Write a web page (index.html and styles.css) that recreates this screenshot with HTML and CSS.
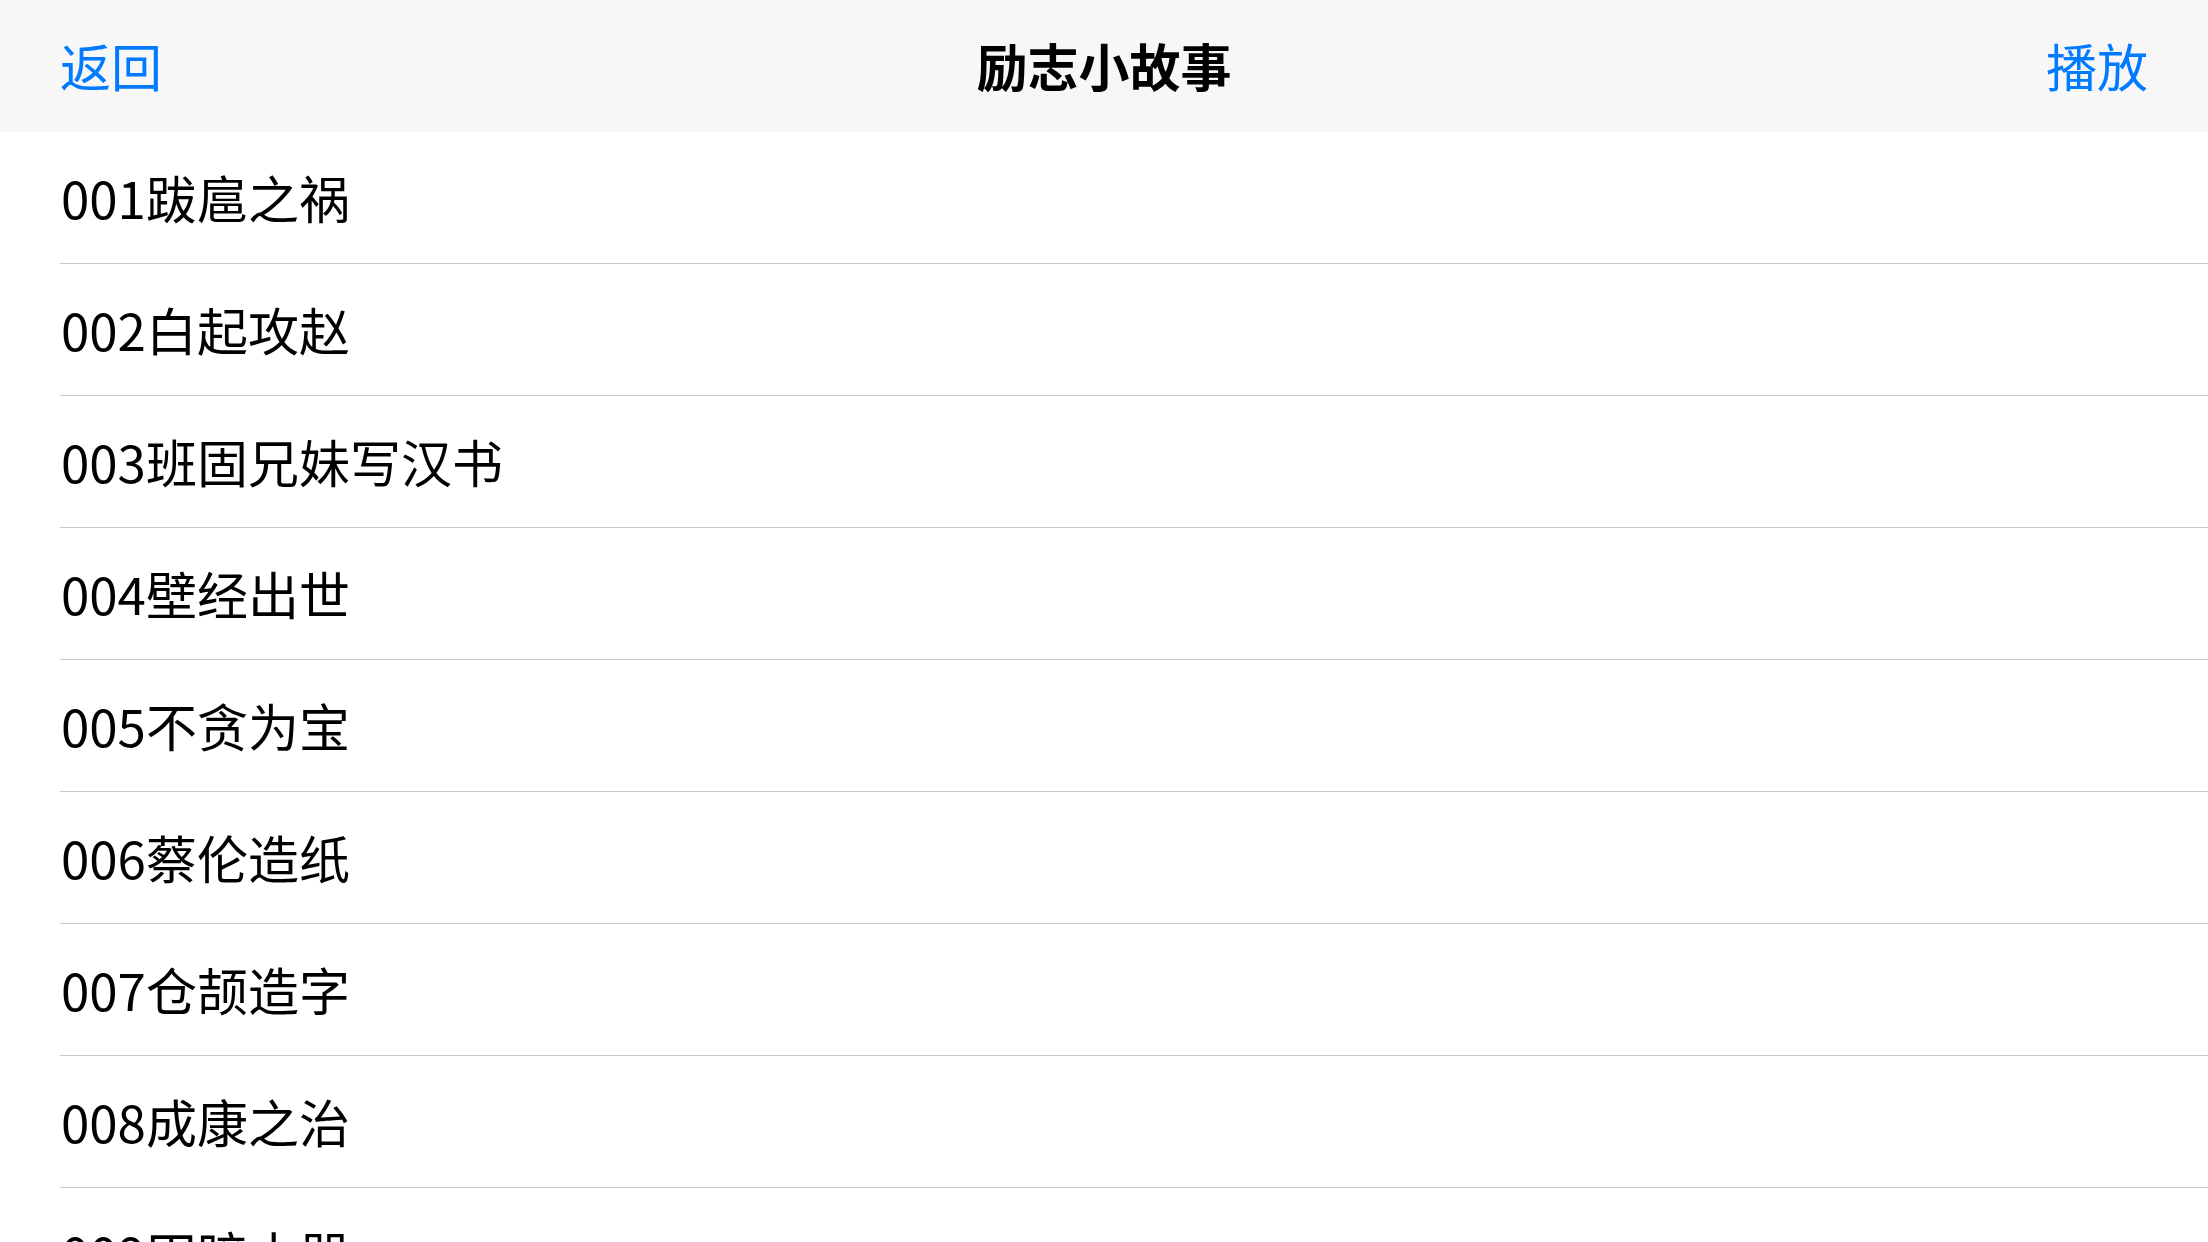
FILE: index.html
```html
<!DOCTYPE html>
<html lang="zh-CN">

<head>
  <meta charset="UTF-8" />
  <meta name="viewport" content="width=device-width, initial-scale=1" />
  <title>励志小故事</title>
  <link rel="stylesheet" href="styles.css">
</head>

<body>

  <header class="navbar">
    <span class="nav-btn">返回</span>
    <span class="nav-title">励志小故事</span>
    <span class="nav-btn nav-right">播放</span>
  </header>

  <ul class="list">
    <li class="row">001跋扈之祸</li>
    <li class="row">002白起攻赵</li>
    <li class="row">003班固兄妹写汉书</li>
    <li class="row">004壁经出世</li>
    <li class="row">005不贪为宝</li>
    <li class="row">006蔡伦造纸</li>
    <li class="row">007仓颉造字</li>
    <li class="row">008成康之治</li>
    <li class="row">009田暗小器</li>
  </ul>

</body>

</html>
```

FILE: styles.css
```css
html,
body {
  margin: 0;
  padding: 0;
  background: #ffffff;
  font-family: "Noto Sans CJK SC", "Noto Sans", sans-serif;
  overflow: hidden;
}

.navbar {
  height: 132px;
  display: flex;
  align-items: center;
  justify-content: space-between;
  padding: 0 60px 2px 60px;
  box-sizing: border-box;
  background: #f7f7f7;
  font-size: 51px;
}

.nav-btn {
  color: #007aff;
  width: 300px;
}

.nav-right {
  text-align: right;
}

.nav-title {
  color: #000000;
  font-weight: 600;
}

.list {
  list-style: none;
  margin: 0;
  padding: 0 0 0 60px;
}

.row {
  box-sizing: border-box;
  height: 132px;
  display: flex;
  align-items: center;
  border-bottom: 1px solid #c8c7cc;
  font-size: 51px;
  color: #000000;
  padding: 0 0 2px 1px;
}
```
